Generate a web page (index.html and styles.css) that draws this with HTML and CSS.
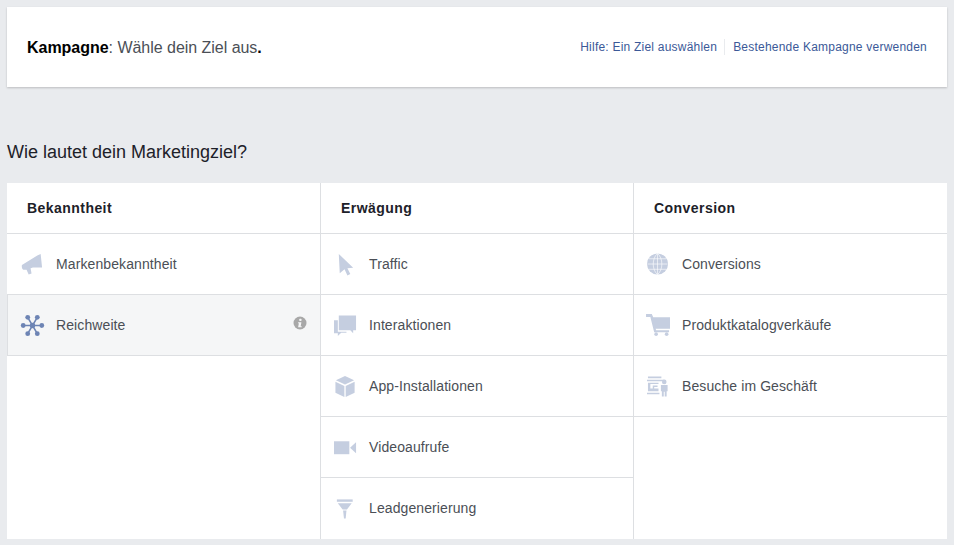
FILE: index.html
```html
<!DOCTYPE html>
<html lang="de">
<head>
<meta charset="UTF-8">
<title>Kampagne</title>
<link rel="stylesheet" href="styles.css">
</head>
<body>
<header class="topbar">
  <div class="title"><b>Kampagne</b>: Wähle dein Ziel aus<b>.</b></div>
  <nav class="links">
    <a href="#">Hilfe: Ein Ziel auswählen</a>
    <a href="#">Bestehende Kampagne verwenden</a>
  </nav>
</header>

<h1>Wie lautet dein Marketingziel?</h1>

<section class="goals">
  <!-- Bekanntheit -->
  <div class="col">
    <h2>Bekanntheit</h2>
    <div class="row">
      <svg class="ico" viewBox="0 0 24 24"><path d="M1 12.500 17 2.500 20.500 1 22 15H12.500L10 16l1 5.500-3 1-2.200-5H2.500C1 17 .5 14 1 12.500z"/></svg>
      <span>Markenbekanntheit</span>
    </div>
    <div class="row active">
      <svg class="ico" viewBox="0 0 24 24"><path class="spokes" d="M12 12 7 3.500M12 12l5-8.500M12 12 7 20.500M12 12l5 8.500M12 12H2M12 12h10"/><circle cx="12" cy="12" r="2.800"/><circle cx="7" cy="3.500" r="2.500"/><circle cx="17" cy="3.500" r="2.500"/><circle cx="7" cy="20.500" r="2.500"/><circle cx="17" cy="20.500" r="2.500"/><circle cx="2.300" cy="12" r="2.500"/><circle cx="21.700" cy="12" r="2.500"/></svg>
      <span>Reichweite</span>
      <svg class="info" viewBox="0 0 14 14"><circle cx="7" cy="7" r="6.500"/><rect class="dot" x="6.200" y="2.800" width="2.400" height="2.200" rx=".8"/><path class="dot" d="M5.200 6.200h3.200l-.7 4.100h1v1H5.100l.8-4.100h-.9z"/></svg>
    </div>
  </div>

  <!-- Erwägung -->
  <div class="col">
    <h2>Erwägung</h2>
    <div class="row">
      <svg class="ico" viewBox="0 0 24 24"><path d="M5 1l15 14.500-6 .5 3 6-3 1.500-3-6.500L6 21z"/></svg>
      <span>Traffic</span>
    </div>
    <div class="row">
      <svg class="ico" viewBox="0 0 24 24"><path d="M5 1.500h18V17h-3v3l-3-3H5z"/><path d="M0 6.500h4V18.500h9v1H7.500L4 23v-3H0z"/></svg>
      <span>Interaktionen</span>
    </div>
    <div class="row">
      <svg class="ico" viewBox="0 0 24 24"><path d="M11.500 1 21 5.500 11.500 10 2 5.500z"/><path d="M1.500 7l9.300 4.400V23l-9.300-4.500z"/><path d="M21.500 7l-9.300 4.400V23l9.300-4.500z"/></svg>
      <span>App-Installationen</span>
    </div>
    <div class="row">
      <svg class="ico" viewBox="0 0 24 24"><path d="M0 5.500h16v13.500H0z"/><path d="M17 12l6-5.500v11.500l-6-5.500z"/></svg>
      <span>Videoaufrufe</span>
    </div>
    <div class="row">
      <svg class="ico" viewBox="0 0 24 24"><path d="M3 2.500h16.500V5H3z"/><path d="M4 6.500h14.500l-5 6.500h-4.500z"/><path d="M9.500 14h3.500l-.8 8.500h-1.800z"/></svg>
      <span>Leadgenerierung</span>
    </div>
  </div>

  <!-- Conversion -->
  <div class="col">
    <h2>Conversion</h2>
    <div class="row">
      <svg class="ico" viewBox="0 0 24 24"><circle cx="11" cy="11.500" r="11"/><path class="lines" d="M.5 11.500h21M2 6h18M2 17h18M11 .5v22M11 .5c-6 5-6 17 0 22M11 .5c6 5 6 17 0 22"/></svg>
      <span>Conversions</span>
    </div>
    <div class="row">
      <svg class="ico" viewBox="0 0 24 24"><path d="M-1 0h6l1.500 3.500H24V15.500H9l.5 1.500H23v2H7.500L3.500 3H-1z"/><circle cx="9.500" cy="21" r="1.900"/><circle cx="20.500" cy="21" r="1.900"/></svg>
      <span>Produktkatalogverkäufe</span>
    </div>
    <div class="row">
      <svg class="ico" viewBox="0 0 24 24"><path d="M1 1.500h14v2H1zM0 5h18v1.500H0zM1 8h11v1.500H3.500V14H6v-3h5v1.500H7.500V14H12v3H1zM0 18.500h13V20H0z"/><circle cx="18" cy="7.200" r="2.400"/><path d="M14.500 10.500h7v6.500h-1v5.500h-2v-5h-1v5h-2V17h-1z"/></svg>
      <span>Besuche im Geschäft</span>
    </div>
  </div>
</section>
</body>
</html>
```

FILE: styles.css
```css
*{box-sizing:border-box;margin:0;padding:0;}
body{font-family:"Liberation Sans",Arial,sans-serif;background:#e9ebee;color:#1d2129;padding:7px;height:545px;overflow:hidden;}
.topbar{height:80px;background:#fff;box-shadow:0 1px 2px rgba(0,0,0,.2);display:flex;align-items:center;justify-content:space-between;padding:0 20px;}
.title{font-size:16px;color:#4b4f56;letter-spacing:-.03px;padding-top:2px;}
.title b{color:#000;}
.links{display:flex;align-items:center;font-size:12px;letter-spacing:.22px;}
.links a{color:#3b5998;text-decoration:none;line-height:16px;}
.links a+a{border-left:1px solid #e9ebee;margin-left:7px;padding-left:8px;}
h1{font-size:18px;font-weight:400;line-height:22px;margin:54px 0 20px;}
.goals{display:grid;grid-template-columns:314px 313px 313px;height:356px;background:#fff;}
.col{border-right:1px solid #dddfe2;}
.col:last-child{border-right:none;}
.col h2{height:51px;font-size:14px;font-weight:700;letter-spacing:.45px;line-height:50px;padding-left:20px;border-bottom:1px solid #dddfe2;}
.row{height:61px;display:flex;align-items:center;padding-left:13px;border-bottom:1px solid #dddfe2;font-size:14px;color:#4b4f56;letter-spacing:.1px;}
.col:nth-child(2) .row:last-child{border-bottom-color:transparent;}
.col:nth-child(1) .row{padding-left:14px;}
.row span{margin-left:12px;flex:1;}
.ico{width:23px;height:23px;fill:#c5cee0;flex:none;overflow:visible;}
.row.active{background:#f5f6f7;box-shadow:inset 1px 0 0 #dddfe2;}
.row.active .ico{fill:#6d84b4;}
.spokes{stroke:#6d84b4;stroke-width:1.600;fill:none;}
.lines{stroke:#fff;stroke-width:.8;fill:none;opacity:.8;}
.info{width:14px;height:14px;fill:#a8a8a8;margin:0 13px 4px 0;flex:none;}
.info .dot{fill:#f5f6f7;}
```
